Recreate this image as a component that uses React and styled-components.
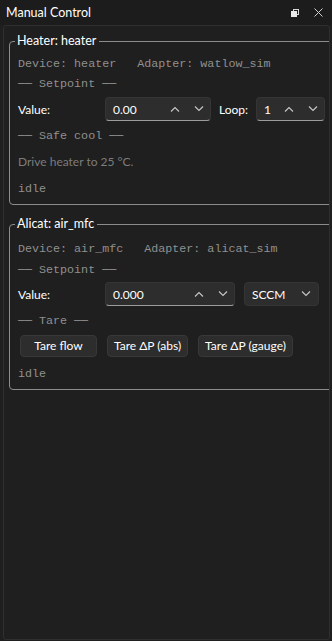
import React from 'react';
import styled, { createGlobalStyle } from 'styled-components';

const GlobalStyle = createGlobalStyle`
  html, body {
    margin: 0;
    padding: 0;
    background: #1f1f1f;
    overflow: hidden;
  }
  * {
    box-sizing: border-box;
  }
`;

const UI_FONT = `Lato, "Open Sans", sans-serif`;
const MONO_FONT = `"Liberation Mono", "DejaVu Sans Mono", monospace`;

const Dock = styled.div`
  width: 332px;
  height: 641px;
  display: flex;
  flex-direction: column;
  background: #1f1f1f;
  font-family: ${UI_FONT};
  font-size: 12px;
  color: #ffffff;
`;

const TitleBar = styled.div`
  height: 25px;
  flex: none;
  display: flex;
  align-items: center;
  justify-content: space-between;
  padding: 0 9px 0 6px;
  background: #1c1c1c;
`;

const Title = styled.span`
  font-size: 12.5px;
  line-height: 16px;
  margin-top: 1px;
`;

const TitleButtons = styled.div`
  display: flex;
  align-items: center;
  gap: 15px;
`;

const Frame = styled.div`
  flex: 1;
  margin: 0 2px 1px 3px;
  border: 1px solid #2f2f2f;
  border-radius: 3px;
  overflow: hidden;
`;

const Scroller = styled.div`
  width: 360px;
  padding: 15px 0 0 5px;
`;

const Group = styled.div`
  position: relative;
  margin-bottom: 19px;
  border: 1px solid #8c8c8c;
  border-radius: 4px;
  padding: 12px 0 0 8px;
  display: flex;
  flex-direction: column;
`;

const GroupTitle = styled.span`
  position: absolute;
  top: -9px;
  left: 5px;
  padding: 0 3px 0 2px;
  background: #1f1f1f;
  font-size: 12.5px;
  line-height: 16px;
`;

const MonoLine = styled.div`
  height: ${p => p.$h || 20}px;
  display: flex;
  align-items: center;
  font-family: ${MONO_FONT};
  font-size: 11.7px;
  color: #909090;
  white-space: pre;
`;

const FormRow = styled.div`
  height: 30px;
  display: flex;
  align-items: center;
`;

const Label = styled.span`
  width: ${p => p.$w}px;
  flex: none;
`;

const Field = styled.div`
  width: ${p => p.$w}px;
  height: 24px;
  flex: none;
  margin-right: ${p => p.$mr || 0}px;
  display: flex;
  align-items: center;
  padding: 0 7px;
  background: #2d2d2d;
  border: 1px solid #353535;
  border-bottom-color: ${p => (p.$accent ? '#9c9c9c' : '#353535')};
  border-radius: 4px;
`;

const FieldText = styled.span`
  flex: 1;
`;

const Arrows = styled.div`
  display: flex;
  align-items: center;
  gap: 14px;
  margin-right: -1px;
`;

const Note = styled.div`
  height: 26px;
  display: flex;
  align-items: center;
  color: #7c7c7c;
`;

const ButtonRow = styled.div`
  height: 26px;
  display: flex;
  align-items: center;
  gap: 10px;
  padding-left: 2px;
`;

const Button = styled.button`
  height: 22px;
  min-width: 77px;
  padding: 0 6px;
  background: #2d2d2d;
  border: 1px solid #383838;
  border-radius: 4px;
  color: #ffffff;
  font-family: ${UI_FONT};
  font-size: 12px;
  line-height: 18px;
`;

const Chevron = ({ up }) => (
  <svg width="10" height="6" viewBox="0 0 10 6">
    <path
      d={up ? 'M1 5.5 L5 1.5 L9 5.5' : 'M1 0.5 L5 4.5 L9 0.5'}
      fill="none"
      stroke="#c8c8c8"
      strokeWidth="1.1"
    />
  </svg>
);

const SpinBox = ({ value, width, mr }) => (
  <Field $w={width} $mr={mr} $accent>
    <FieldText>{value}</FieldText>
    <Arrows>
      <Chevron up />
      <Chevron />
    </Arrows>
  </Field>
);

const Combo = ({ value, width, mr }) => (
  <Field $w={width} $mr={mr}>
    <FieldText>{value}</FieldText>
    <Chevron />
  </Field>
);

const FloatIcon = () => (
  <svg width="8" height="8" viewBox="0 0 8 8">
    <rect x="2.5" y="0.5" width="5" height="5" fill="none" stroke="#d8d8d8" />
    <rect x="0" y="2" width="6" height="6" fill="#e8e8e8" />
  </svg>
);

const CloseIcon = () => (
  <svg width="9" height="9" viewBox="0 0 9 9">
    <path d="M0.5 0.5 L8.5 8.5 M8.5 0.5 L0.5 8.5" stroke="#d0d0d0" strokeWidth="1" />
  </svg>
);

export default function App() {
  return (
    <>
      <GlobalStyle />
      <Dock>
        <TitleBar>
          <Title>Manual Control</Title>
          <TitleButtons>
            <FloatIcon />
            <CloseIcon />
          </TitleButtons>
        </TitleBar>
        <Frame>
          <Scroller>
            <Group>
              <GroupTitle>Heater: heater</GroupTitle>
              <MonoLine>{'Device: heater   Adapter: watlow_sim'}</MonoLine>
              <MonoLine>{'── Setpoint ──'}</MonoLine>
              <FormRow>
                <Label $w={87}>Value:</Label>
                <SpinBox value="0.00" width={106} mr={8} />
                <Label $w={37}>Loop:</Label>
                <SpinBox value="1" width={69} />
              </FormRow>
              <MonoLine $h={24}>{'── Safe cool ──'}</MonoLine>
              <Note>Drive heater to 25 °C.</Note>
              <MonoLine $h={30}>idle</MonoLine>
            </Group>
            <Group>
              <GroupTitle>Alicat: air_mfc</GroupTitle>
              <MonoLine $h={23}>{'Device: air_mfc   Adapter: alicat_sim'}</MonoLine>
              <MonoLine $h={19}>{'── Setpoint ──'}</MonoLine>
              <FormRow>
                <Label $w={87}>Value:</Label>
                <SpinBox value="0.000" width={130} mr={9} />
                <Combo value="SCCM" width={75} mr={10} />
                <Combo value="" width={60} />
              </FormRow>
              <MonoLine $h={24}>{'── Tare ──'}</MonoLine>
              <ButtonRow>
                <Button>Tare flow</Button>
                <Button>Tare ΔP (abs)</Button>
                <Button>Tare ΔP (gauge)</Button>
              </ButtonRow>
              <MonoLine $h={30}>idle</MonoLine>
            </Group>
          </Scroller>
        </Frame>
      </Dock>
    </>
  );
}
